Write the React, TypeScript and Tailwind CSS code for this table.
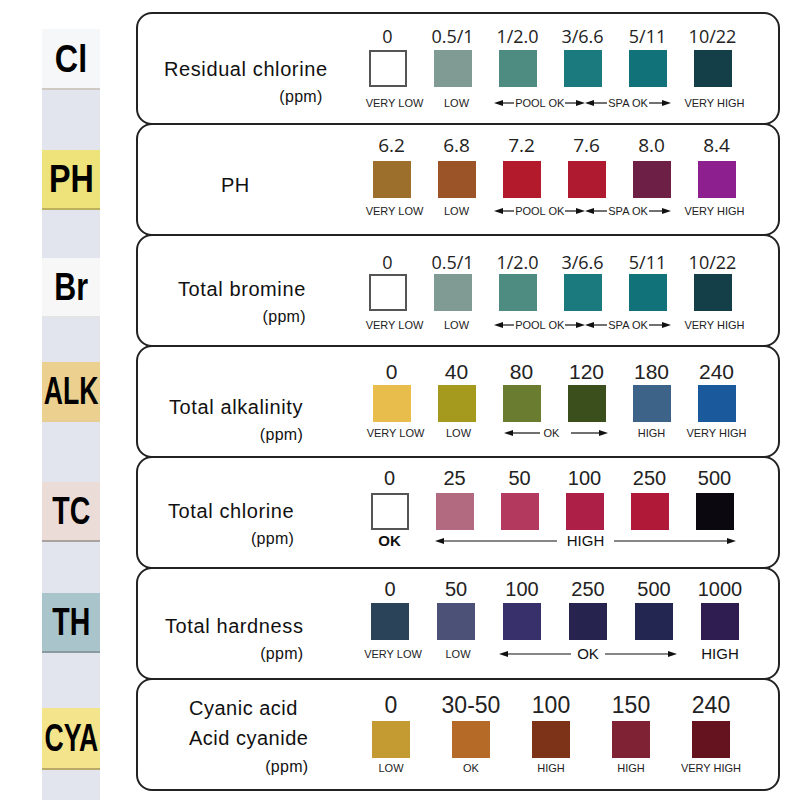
import type { ReactNode } from "react";

const ARIAL = "font-['Liberation_Sans',Arial,sans-serif]";

function Arrow({ dir, w }: { dir: "l" | "r"; w: number }) {
  return (
    <svg width={w} height="8" viewBox={`0 0 ${w} 8`} className="shrink-0">
      {dir === "l" ? (
        <>
          <polygon points="0,4 9,1 9,7" fill="#111" />
          <line x1="8" y1="4" x2={w} y2="4" stroke="#111" strokeWidth="1.2" />
        </>
      ) : (
        <>
          <line x1="0" y1="4" x2={w - 8} y2="4" stroke="#111" strokeWidth="1.2" />
          <polygon points={`${w},4 ${w - 9},1 ${w - 9},7`} fill="#111" />
        </>
      )}
    </svg>
  );
}

// small caps-ish labels under the swatches
function Tag({ w, children, extra = "" }: { w: string; children: ReactNode; extra?: string }) {
  return (
    <div className={`${w} ${extra} flex justify-center whitespace-nowrap`}>{children}</div>
  );
}

function PoolSpaLabels() {
  return (
    <div className="flex items-center h-[18px] text-[11px] text-[#222]">
      <Tag w="w-[65px]" extra="pl-[14px]">VERY LOW</Tag>
      <Tag w="w-[65px]" extra="pl-[8px]">LOW</Tag>
      <div className="w-[195px] flex items-center justify-center">
        <Arrow dir="l" w={20} />
        <span className="px-[1px]">POOL OK</span>
        <Arrow dir="r" w={20} />
        <Arrow dir="l" w={22} />
        <span className="px-[1px]">SPA OK</span>
        <Arrow dir="r" w={22} />
      </div>
      <Tag w="w-[65px]" extra="pl-[4px]">VERY HIGH</Tag>
    </div>
  );
}

type Panel = {
  labelW: string;
  titlePad: string;
  title: ReactNode;
  numPad: string;
  numFont: string;
  col: string;
  nums: string[];
  swatches: string[];
  swatchMt: string;
  labelMt: string;
  labels: ReactNode;
};

const WHITE = "bg-white border-2 border-[#555]";
const THIN = "font-['Open_Sans',sans-serif] font-normal";

function Title({ text, ppmExtra = "" }: { text: string; ppmExtra?: string }) {
  return (
    <div className="flex flex-col items-end">
      <div className="text-[20px] leading-[28px] tracking-[0.6px] whitespace-nowrap">{text}</div>
      <div className={`text-[16px] leading-[28px] tracking-[0.3px] ${ppmExtra}`}>(ppm)</div>
    </div>
  );
}

const panels: Panel[] = [
  {
    labelW: "w-[217px]",
    titlePad: "pl-[26px] pt-[41px]",
    title: <Title text="Residual chlorine" ppmExtra="mr-[5px]" />,
    numPad: "pt-[10px]",
    numFont: `${THIN} text-[18px]`,
    col: "w-[65px]",
    nums: ["0", "0.5/1", "1/2.0", "3/6.6", "5/11", "10/22"],
    swatches: [WHITE, "bg-[#809b93]", "bg-[#4e8c82]", "bg-[#1a7a7d]", "bg-[#117279]", "bg-[#153f48]"],
    swatchMt: "mt-[2px]",
    labelMt: "mt-[7px]",
    labels: <PoolSpaLabels />,
  },
  {
    labelW: "w-[221px]",
    titlePad: "pl-[83px] pt-[46px]",
    title: <div className="text-[20px] leading-[28px] tracking-[0.5px]">PH</div>,
    numPad: "pt-[8px]",
    numFont: `${THIN} text-[19px]`,
    col: "w-[65px]",
    nums: ["6.2", "6.8", "7.2", "7.6", "8.0", "8.4"],
    swatches: ["bg-[#9c6f2c]", "bg-[#9a5427]", "bg-[#b31a2c]", "bg-[#b01a30]", "bg-[#6d1f46]", "bg-[#8e1f8f]"],
    swatchMt: "mt-[4px]",
    labelMt: "mt-[4px]",
    labels: (
      <div className="-ml-[4px]">
        <PoolSpaLabels />
      </div>
    ),
  },
  {
    labelW: "w-[217px]",
    titlePad: "pl-[40px] pt-[39px]",
    title: <Title text="Total bromine" />,
    numPad: "pt-[14px]",
    numFont: `${THIN} text-[18px]`,
    col: "w-[65px]",
    nums: ["0", "0.5/1", "1/2.0", "3/6.6", "5/11", "10/22"],
    swatches: [WHITE, "bg-[#809b93]", "bg-[#4e8c82]", "bg-[#1a7a7d]", "bg-[#117279]", "bg-[#153f48]"],
    swatchMt: "mt-[0px]",
    labelMt: "mt-[5px]",
    labels: <PoolSpaLabels />,
  },
  {
    labelW: "w-[221px]",
    titlePad: "pl-[31px] pt-[46px]",
    title: <Title text="Total alkalinity" />,
    numPad: "pt-[13px]",
    numFont: `${ARIAL} text-[21px]`,
    col: "w-[65px]",
    nums: ["0", "40", "80", "120", "180", "240"],
    swatches: ["bg-[#e9bd4c]", "bg-[#a69a1e]", "bg-[#6a7c2f]", "bg-[#3b4f1c]", "bg-[#3d6388]", "bg-[#1a5a9c]"],
    swatchMt: "mt-[1px]",
    labelMt: "mt-[2px]",
    labels: (
      <div className="flex items-center h-[18px] text-[11px] text-[#222]">
        <Tag w="w-[65px]" extra="pl-[8px]">VERY LOW</Tag>
        <Tag w="w-[65px]" extra="pl-[4px]">LOW</Tag>
        <div className="w-[130px] flex items-center justify-center gap-[4px] pl-[4px]">
          <Arrow dir="l" w={36} />
          <span className="pr-[8px]">OK</span>
          <Arrow dir="r" w={37} />
        </div>
        <Tag w="w-[65px]">HIGH</Tag>
        <Tag w="w-[65px]">VERY HIGH</Tag>
      </div>
    ),
  },
  {
    labelW: "w-[219px]",
    titlePad: "pl-[30px] pt-[39px]",
    title: <Title text="Total chlorine" />,
    numPad: "pt-[8px]",
    numFont: `${ARIAL} text-[20px]`,
    col: "w-[65px]",
    nums: ["0", "25", "50", "100", "250", "500"],
    swatches: [WHITE, "bg-[#b16a80]", "bg-[#b4395e]", "bg-[#ae1f48]", "bg-[#b01a38]", "bg-[#0c0810]"],
    swatchMt: "mt-[3px]",
    labelMt: "mt-[2px]",
    labels: (
      <div className="flex items-center h-[18px] text-[#111]">
        <Tag w="w-[65px]" extra="text-[15px] font-bold">OK</Tag>
        <div className="w-[327px] flex items-center justify-center gap-[10px]">
          <Arrow dir="l" w={122} />
          <span className="text-[15px]">HIGH</span>
          <Arrow dir="r" w={122} />
        </div>
      </div>
    ),
  },
  {
    labelW: "w-[219px]",
    titlePad: "pl-[27px] pt-[43px]",
    title: <Title text="Total hardness" />,
    numPad: "pt-[8px]",
    numFont: `${ARIAL} text-[20px]`,
    col: "w-[66px]",
    nums: ["0", "50", "100", "250", "500", "1000"],
    swatches: ["bg-[#2a4358]", "bg-[#4c5177]", "bg-[#37306b]", "bg-[#26244e]", "bg-[#232650]", "bg-[#2f1d52]"],
    swatchMt: "mt-[2px]",
    labelMt: "mt-[5px]",
    labels: (
      <div className="flex items-center h-[18px] text-[11px] text-[#222]">
        <Tag w="w-[66px]" extra="pl-[6px]">VERY LOW</Tag>
        <Tag w="w-[66px]" extra="pl-[4px]">LOW</Tag>
        <div className="w-[198px] flex items-center justify-center gap-[6px]">
          <Arrow dir="l" w={72} />
          <span className="text-[15px] text-[#111]">OK</span>
          <Arrow dir="r" w={72} />
        </div>
        <Tag w="w-[66px]" extra="text-[15px] text-[#111]">HIGH</Tag>
      </div>
    ),
  },
  {
    labelW: "w-[213px]",
    titlePad: "pl-[51px] pt-[13px]",
    title: (
      <div className="flex flex-col items-end">
        <div className="text-[20px] leading-[30px] tracking-[0.5px] whitespace-nowrap">
          Cyanic acid
          <br />
          Acid cyanide
        </div>
        <div className="text-[16px] leading-[28px] tracking-[0.3px]">(ppm)</div>
      </div>
    ),
    numPad: "pt-[13px]",
    numFont: `${ARIAL} text-[23px]`,
    col: "w-[80px]",
    nums: ["0", "30-50", "100", "150", "240"],
    swatches: ["bg-[#c49a32]", "bg-[#b56a28]", "bg-[#7c3318]", "bg-[#7f2334]", "bg-[#661320]"],
    swatchMt: "mt-[4px]",
    labelMt: "mt-[1px]",
    labels: (
      <div className="flex items-center h-[18px] text-[11px] text-[#222]">
        <Tag w="w-[80px]">LOW</Tag>
        <Tag w="w-[80px]">OK</Tag>
        <Tag w="w-[80px]">HIGH</Tag>
        <Tag w="w-[80px]">HIGH</Tag>
        <Tag w="w-[80px]">VERY HIGH</Tag>
      </div>
    ),
  },
];

const pads = [
  { t: "Cl", bg: "bg-[#f6f7f9]", gap: "mt-0", h: "h-[61px]", sx: "scale-x-85", edge: "border-[#cfcac2]" },
  { t: "PH", bg: "bg-[#eee27a]", gap: "mt-[60px]", h: "h-[60px]", sx: "scale-x-85", edge: "border-[#bdb05e]" },
  { t: "Br", bg: "bg-[#f7f7f8]", gap: "mt-[48px]", h: "h-[60px]", sx: "scale-x-80", edge: "border-[#e4e4e6]" },
  { t: "ALK", bg: "bg-[#ecd08f]", gap: "mt-[44px]", h: "h-[60px]", sx: "scale-x-70", edge: "border-[#e6cd93]" },
  { t: "TC", bg: "bg-[#ecdcd7]", gap: "mt-[60px]", h: "h-[60px]", sx: "scale-x-75", edge: "border-[#a9a29e]" },
  { t: "TH", bg: "bg-[#a9c4cb]", gap: "mt-[51px]", h: "h-[60px]", sx: "scale-x-75", edge: "border-[#8a9ba0]" },
  { t: "CYA", bg: "bg-[#f4e48b]", gap: "mt-[55px]", h: "h-[62px]", sx: "scale-x-70", edge: "border-[#b9a868]" },
];

export default function App() {
  return (
    <div className={`w-[800px] h-[800px] overflow-hidden bg-white flex ${ARIAL} text-[#111]`}>
      {/* test strip */}
      <div className="ml-[42px] mt-[29px] w-[58px] bg-[#e3e5ee] flex flex-col">
        {pads.map((p) => (
          <div
            key={p.t}
            className={`${p.gap} ${p.h} ${p.bg} border-b-2 ${p.edge} flex items-center justify-center`}
          >
            <span className={`text-[38px] font-bold leading-none text-black ${p.sx} whitespace-nowrap`}>
              {p.t}
            </span>
          </div>
        ))}
      </div>

      {/* colour chart */}
      <div className="ml-[36px] mt-[12px] w-[644px] flex flex-col">
        {panels.map((p, i) => (
          <div
            key={i}
            className={`h-[113px] border-2 border-[#222] rounded-[16px] flex ${i > 0 ? "-mt-[2px]" : ""}`}
          >
            <div className={`${p.labelW} shrink-0 ${p.titlePad}`}>
              <div className="w-fit">{p.title}</div>
            </div>
            <div className={`flex flex-col ${p.numPad}`}>
              <div className={`flex h-[24px] leading-[24px] text-[#222] ${p.numFont}`}>
                {p.nums.map((n, j) => (
                  <div key={j} className={`${p.col} text-center whitespace-nowrap`}>
                    {n}
                  </div>
                ))}
              </div>
              <div className={`flex ${p.swatchMt}`}>
                {p.swatches.map((s, j) => (
                  <div key={j} className={`${p.col} flex justify-center`}>
                    <div className={`w-[38px] h-[37px] ${s}`} />
                  </div>
                ))}
              </div>
              <div className={p.labelMt}>{p.labels}</div>
            </div>
          </div>
        ))}
      </div>
    </div>
  );
}
